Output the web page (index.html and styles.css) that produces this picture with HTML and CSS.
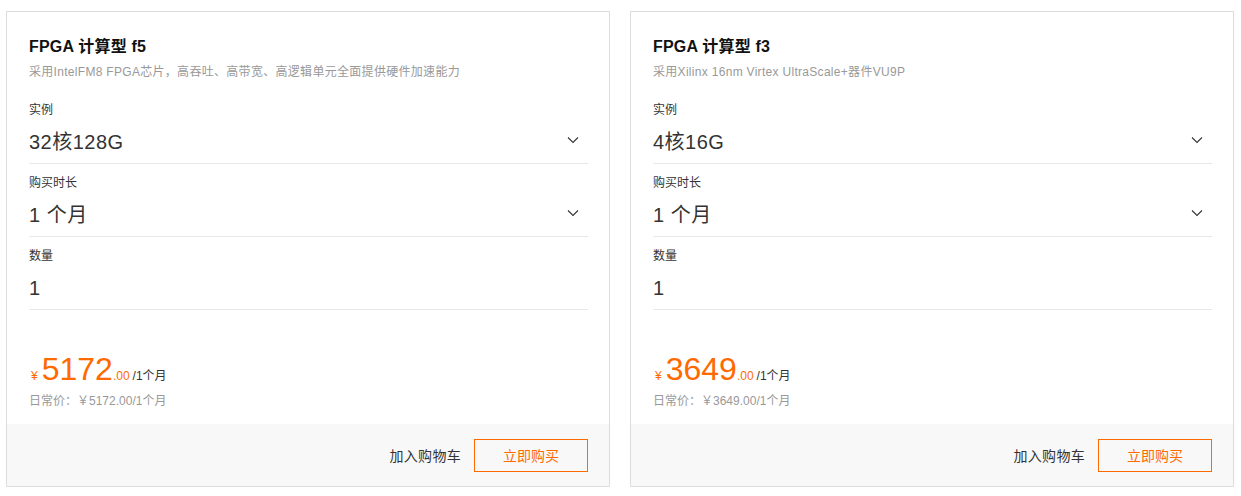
FILE: index.html
```html
<!DOCTYPE html>
<html lang="zh-CN">
<head>
<meta charset="utf-8">
<title>FPGA</title>
<link rel="stylesheet" href="styles.css">
</head>
<body>
<div class="page">
  <div class="card">
    <div class="body">
      <div class="title">FPGA 计算型 f5</div>
      <div class="desc">采用IntelFM8 FPGA芯片，高吞吐、高带宽、高逻辑单元全面提供硬件加速能力</div>
      <div class="field first">
        <div class="label">实例</div>
        <div class="value"><span>32核128G</span><svg class="chev" width="12" height="8" viewBox="0 0 12 8"><path d="M1 1.5 L6 6.5 L11 1.5" fill="none" stroke="#333" stroke-width="1.1"/></svg></div>
      </div>
      <div class="field">
        <div class="label">购买时长</div>
        <div class="value"><span>1 个月</span><svg class="chev" width="12" height="8" viewBox="0 0 12 8"><path d="M1 1.5 L6 6.5 L11 1.5" fill="none" stroke="#333" stroke-width="1.1"/></svg></div>
      </div>
      <div class="field">
        <div class="label">数量</div>
        <div class="value"><span>1</span></div>
      </div>
      <div class="price">
        <span class="yen">¥</span><span class="num">5172</span><span class="dec">.00</span><span class="per">/1个月</span>
      </div>
      <div class="orig">日常价：￥5172.00/1个月</div>
    </div>
    <div class="foot">
      <span class="cart">加入购物车</span>
      <span class="buy">立即购买</span>
    </div>
  </div>
  <div class="card">
    <div class="body">
      <div class="title">FPGA 计算型 f3</div>
      <div class="desc">采用Xilinx 16nm Virtex UltraScale+器件VU9P</div>
      <div class="field first">
        <div class="label">实例</div>
        <div class="value"><span>4核16G</span><svg class="chev" width="12" height="8" viewBox="0 0 12 8"><path d="M1 1.5 L6 6.5 L11 1.5" fill="none" stroke="#333" stroke-width="1.1"/></svg></div>
      </div>
      <div class="field">
        <div class="label">购买时长</div>
        <div class="value"><span>1 个月</span><svg class="chev" width="12" height="8" viewBox="0 0 12 8"><path d="M1 1.5 L6 6.5 L11 1.5" fill="none" stroke="#333" stroke-width="1.1"/></svg></div>
      </div>
      <div class="field">
        <div class="label">数量</div>
        <div class="value"><span>1</span></div>
      </div>
      <div class="price">
        <span class="yen">¥</span><span class="num">3649</span><span class="dec">.00</span><span class="per">/1个月</span>
      </div>
      <div class="orig">日常价：￥3649.00/1个月</div>
    </div>
    <div class="foot">
      <span class="cart">加入购物车</span>
      <span class="buy">立即购买</span>
    </div>
  </div>
</div>
</body>
</html>
```
FILE: styles.css
```css
* { box-sizing: border-box; }
html, body {
  margin: 0;
  padding: 0;
  background: #fff;
  font-family: "Liberation Sans", Arial, "Noto Sans CJK SC", sans-serif;
  color: #333;
}
.page {
  display: flex;
  gap: 20px;
  padding: 11px 0 0 6px;
}
.card {
  width: 604px;
  height: 476px;
  border: 1px solid #dcdcdc;
  display: flex;
  flex-direction: column;
}
.body {
  padding: 23px 21px 0 22px;
  flex: 1;
}
.title {
  font-size: 16px;
  line-height: 24px;
  font-weight: bold;
  color: #111;
  letter-spacing: 0.2px;
}
.desc {
  margin-top: 4px;
  font-size: 12px;
  line-height: 18px;
  color: #999;
  letter-spacing: 0.3px;
}
.field {
  padding-top: 10px;
  border-bottom: 1px solid #e8e8e8;
}
.field.first {
  padding-top: 20px;
}
.label {
  font-size: 12px;
  line-height: 18px;
  color: #333;
}
.value {
  margin-top: 7px;
  height: 37px;
  padding-bottom: 7px;
  padding-top: 1px;
  font-size: 20px;
  line-height: 30px;
  color: #333;
  display: flex;
  align-items: center;
  justify-content: space-between;
  letter-spacing: 0.5px;
}
.chev {
  margin-right: 9px;
  margin-top: -4px;
}
.price {
  margin-top: 41px;
  height: 36px;
  display: flex;
  align-items: baseline;
  color: #ff6a00;
}
.yen {
  font-size: 12px;
  margin-left: 2px;
  margin-right: 4px;
}
.num {
  font-size: 32px;
  line-height: 36px;
}
.dec {
  font-size: 12px;
}
.per {
  font-size: 12px;
  color: #333;
  margin-left: 3px;
}
.orig {
  margin-top: 5px;
  font-size: 12px;
  line-height: 18px;
  color: #999;
}
.foot {
  height: 62px;
  background: #f8f8f8;
  display: flex;
  align-items: center;
  justify-content: flex-end;
  padding-right: 21px;
}
.cart {
  font-size: 14px;
  color: #333;
  margin-right: 13px;
  letter-spacing: 0.3px;
}
.buy {
  width: 114px;
  height: 33px;
  border: 1px solid #ff6a00;
  color: #ff6a00;
  font-size: 14px;
  display: flex;
  align-items: center;
  justify-content: center;
}
```
